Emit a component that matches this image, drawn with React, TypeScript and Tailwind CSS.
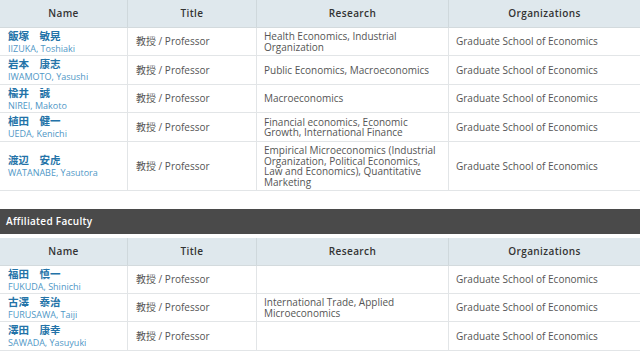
import React from "react";

type Row = { jp: string; en: string; research: string; h: number };

const font = { fontFamily: '"Open Sans", "Noto Sans CJK JP", sans-serif' };

const t1: Row[] = [
  { jp: "飯塚　敏晃", en: "IIZUKA, Toshiaki", research: "Health Economics, Industrial Organization", h: 28 },
  { jp: "岩本　康志", en: "IWAMOTO, Yasushi", research: "Public Economics, Macroeconomics", h: 29 },
  { jp: "楡井　誠", en: "NIREI, Makoto", research: "Macroeconomics", h: 28 },
  { jp: "植田　健一", en: "UEDA, Kenichi", research: "Financial economics, Economic Growth, International Finance", h: 29 },
  { jp: "渡辺　安虎", en: "WATANABE, Yasutora", research: "Empirical Microeconomics (Industrial Organization, Political Economics, Law and Economics), Quantitative Marketing", h: 49 },
];

const t2: Row[] = [
  { jp: "福田　慎一", en: "FUKUDA, Shinichi", research: "", h: 28 },
  { jp: "古澤　泰治", en: "FURUSAWA, Taiji", research: "International Trade, Applied Microeconomics", h: 28 },
  { jp: "澤田　康幸", en: "SAWADA, Yasuyuki", research: "", h: 29 },
];

const cols = "grid grid-cols-[128px_129px_192px_191px]";

function Header() {
  return (
    <div className={`${cols} h-[28px] bg-[#dfe8ed] border-b border-[#d3dadd] text-[10px] font-semibold text-[#333] tracking-[0.4px]`}>
      {["Name", "Title", "Research", "Organizations"].map((h, i) => (
        <div key={h} className={`flex items-center justify-center ${i < 3 ? "border-r border-[#cfd8dc]" : ""}`}>
          {h}
        </div>
      ))}
    </div>
  );
}

function Rows({ rows }: { rows: Row[] }) {
  return (
    <>
      {rows.map((r) => (
        <div key={r.en} className={`${cols} border-b border-[#e2e5e7] bg-white`} style={{ height: r.h }}>
          <div className="flex flex-col justify-center pl-[8px] border-r border-[#e2e5e7]">
            <div className="text-[10.5px] leading-[13px] font-semibold text-[#2373a8]">{r.jp}</div>
            <div className="text-[9px] leading-[11px] text-[#4f97c6]">{r.en}</div>
          </div>
          <div className="flex items-center pl-[8px] border-r border-[#e2e5e7] text-[10px] text-[#555]">
            教授 / Professor
          </div>
          <div className="flex items-center pl-[7px] pr-[9px] border-r border-[#e2e5e7] text-[10px] leading-[10.5px] text-[#555]">
            {r.research}
          </div>
          <div className="flex items-center pl-[7px] text-[10px] text-[#555]">
            Graduate School of Economics
          </div>
        </div>
      ))}
    </>
  );
}

export default function App() {
  return (
    <div className="w-[640px] h-[352px] overflow-hidden bg-white" style={font}>
      <Header />
      <Rows rows={t1} />
      <div className="h-[18px]" />
      <div className="h-[25px] bg-[#4a4a4a] flex items-center pl-[6px] text-[10px] font-semibold text-white tracking-[0.3px]">
        Affiliated Faculty
      </div>
      <div className="h-[4px]" />
      <Header />
      <Rows rows={t2} />
    </div>
  );
}
